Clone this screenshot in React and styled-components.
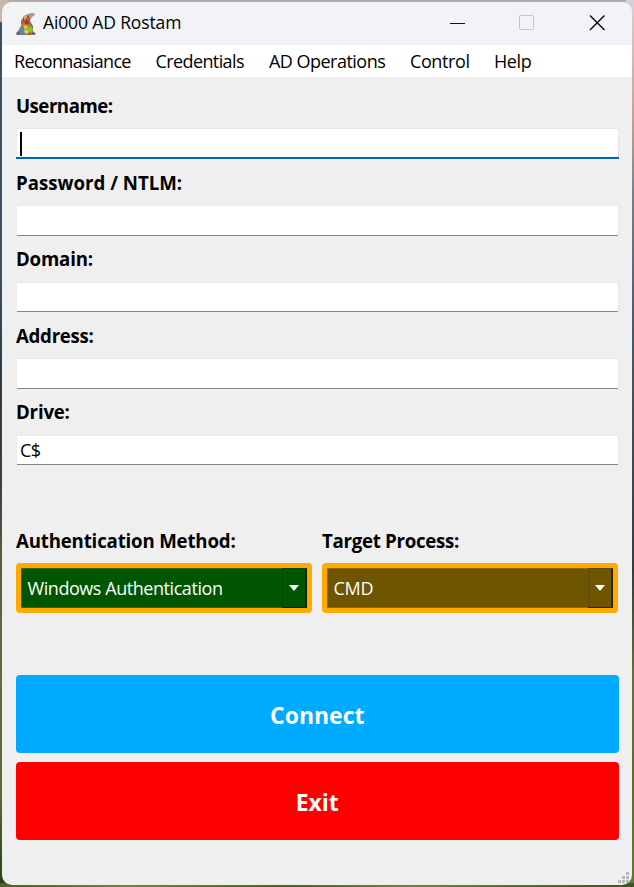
import React from "react";
import styled, { createGlobalStyle } from "styled-components";

const Global = createGlobalStyle`
  * { box-sizing: border-box; }
  html, body { margin: 0; padding: 0; overflow: hidden; }
  body { font-family: "Open Sans", "Noto Sans", sans-serif; font-size: 18px; color: #000; }
`;

const Desktop = styled.div`
  width: 634px;
  height: 887px;
  padding: 2px;
  background:
    linear-gradient(#b5aba9, #b5aba9) 8px 0 / 618px 4px no-repeat,
    linear-gradient(90deg, #4f5e25, #78803f 20%, #50621f 45%, #747f42 65%, #3f5423) 0 883px / 634px 4px no-repeat,
    linear-gradient(#cbb5a9 0 21px, #3d4d5c 23px, #43515f 260px, #303c45 370px, #38413d 480px, #565e42 560px, #636b40 680px, #5e6b36 790px, #254018 887px) 0 0 / 317px 887px no-repeat,
    linear-gradient(#d7d1d8, #c0a391 120px, #78828c 190px, #4b5965 330px, #343e3f 570px, #66703f 680px, #5e6b32 780px, #65763c 887px) 317px 0 / 317px 887px no-repeat;
`;

const Window = styled.main`
  width: 630px;
  height: 883px;
  display: flex;
  flex-direction: column;
  position: relative;
  overflow: hidden;
  border-radius: 10px;
  background: #efefef;
`;

const Text = styled.span`
  white-space: pre;
  letter-spacing: ${(p) => p.$spacing || 0}px;
`;

const TitleBar = styled.header`
  height: 43px;
  flex: none;
  display: flex;
  align-items: center;
  padding-left: 13px;
  background: #f1f3f6;
`;

const Title = styled.h1`
  flex: 1;
  margin: 0 0 3px 6px;
  font-size: 17.5px;
  line-height: 24px;
  font-weight: 400;
`;

const WindowButton = styled.button`
  width: 70px;
  height: 43px;
  padding: 0 0 2px;
  border: 0;
  background: none;
  display: flex;
  align-items: center;
  justify-content: center;
`;

const MenuBar = styled.nav`
  height: 32px;
  flex: none;
  display: flex;
  align-items: center;
  padding-left: 12px;
  background: #fff;
`;

const MenuItem = styled.div`
  width: ${(p) => p.$width}px;
  line-height: 32px;
`;

const Form = styled.form`
  padding: 15px 14px 0;
`;

const Field = styled.div`
  height: ${(p) => p.$height}px;
`;

const Label = styled.label`
  display: block;
  height: 28px;
  line-height: ${(p) => (p.$raised ? 26 : 28)}px;
  margin-bottom: 8px;
  font-weight: 700;
  font-size: 18.67px;
`;

const Input = styled.div`
  height: ${(p) => (p.$tall ? 31 : 30)}px;
  margin-left: ${(p) => (p.$focused ? 0 : 1)}px;
  width: ${(p) => (p.$focused ? 603 : 601)}px;
  display: flex;
  align-items: center;
  padding: ${(p) => (p.$focused ? "1px 4px 0" : "0 3px 1px")};
  background: #fff;
  border-top: 1px solid #e7e9eb;
  border-bottom: ${(p) => (p.$focused ? "2px solid #0067c0" : "1px solid #868686")};
  box-shadow: ${(p) =>
    p.$focused ? "inset 1px 0 #e9ebed, inset -1px 0 #dfe5ea" : "1px 0 #e4e7e9, -1px 0 #ebeced"};
`;

const Caret = styled.span`
  width: 2px;
  height: 24px;
  background: #000;
`;

const Options = styled.div`
  display: grid;
  grid-template-columns: 296px 296px;
  gap: 10px;
  margin-top: 62px;
`;

const Combo = styled.div`
  height: 50px;
  display: flex;
  border: 5px solid #ffaa00;
  border-radius: 4px;
  background: ${(p) => p.$color};
  box-shadow: inset 0 0 0 1px ${(p) => p.$edge};
  color: #fff;
  padding-left: 6.5px;
`;

const ComboValue = styled.div`
  flex: 1;
  line-height: 40px;
`;

const Arrow = styled.div`
  width: 25px;
  height: 40px;
  padding-right: 1px;
  display: flex;
  align-items: center;
  justify-content: center;
  border-style: solid;
  border-width: 1px 2px 1px 1px;
  border-color: ${(p) => p.$edge} ${(p) => p.$dark} ${(p) => p.$dark} ${(p) => p.$edge};
`;

const Actions = styled.div`
  display: grid;
  grid-template-rows: 78px 78px;
  gap: 9px;
  margin-top: 62px;
`;

const ActionButton = styled.button`
  width: 602.5px;
  padding: 1px 0 0;
  border: 0;
  border-radius: 4px;
  background: ${(p) => p.$color};
  color: #fff;
  font: 700 23px/30px "Open Sans", sans-serif;
`;

const Grip = styled.svg`
  position: absolute;
  right: 3px;
  bottom: 2px;
`;

function AppIcon() {
  return (
    <svg width="22" height="24" viewBox="0 0 22 24">
      <path d="M1 21L4 18L6 14L6 9L9 4L13 2L16 5L15 9L18 14L18 19L21 22L17 23L2 23Z" fill="#8f6b5c" />
      <path d="M12 3L15 1L19 1L20 3L17 5L15 8Z" fill="#b89682" />
      <path d="M8 6L11 3L14 4L15 9L11 11L8 11Z" fill="#b05330" />
      <path d="M9 4L12 3L12 6L9 8Z" fill="#dda57b" />
      <path d="M6 12L10 11L15 12L14 15L7 16Z" fill="#c97b3a" />
      <path d="M9 14L12 13L13 17L9 18Z" fill="#eac32e" />
      <path d="M11 9L14 10L13 13L10 12Z" fill="#9a3528" />
      <path d="M4 17L9 16L10 18L9 22H5Z" fill="#229be0" />
      <path d="M12 15L16 14L18 18L17 21L12 19Z" fill="#7cc52c" />
      <path d="M9 18L13 18L14 21L10 22Z" fill="#f6c83c" />
      <path d="M1 22L4 20V23ZM17 20L21 22L18 23Z" fill="#75545a" />
    </svg>
  );
}

const menus = [
  ["Reconnasiance", 141.5, -0.68],
  ["Credentials", 113.5, -0.6],
  ["AD Operations", 141, -0.52],
  ["Control", 84, -0.4],
  ["Help", 60, -0.4],
];

const fields = [
  { label: "Username:", height: 77, spacing: -0.5, focused: true, tall: true },
  { label: "Password / NTLM:", height: 77, spacing: 0, tall: true },
  { label: "Domain:", height: 76, spacing: -0.2, raised: true },
  { label: "Address:", height: 77, spacing: -0.28, tall: true },
  { label: "Drive:", height: 66, spacing: -0.2, raised: true, value: "C$" },
];

const combos = [
  { label: "Authentication Method:", spacing: -0.18, value: "Windows Authentication", valueSpacing: -0.44, color: "#005500", edge: "#416500", dark: "#002500", bevel: "#004800" },
  { label: "Target Process:", spacing: -0.28, value: "CMD", valueSpacing: -0.3, color: "#6e5500", edge: "#936b00", dark: "#2c2200", bevel: "#5d4800" },
];

export default function App() {
  return (
    <Desktop>
      <Global />
      <Window>
        <TitleBar>
          <AppIcon />
          <Title><Text $spacing={-0.13}>Ai000 AD Rostam</Text></Title>
          <WindowButton aria-label="Minimize">
            <svg width="16" height="16"><path d="M1 8.5H16" stroke="#111" /></svg>
          </WindowButton>
          <WindowButton aria-label="Maximize">
            <svg width="16" height="16"><rect x="0.5" y="0.5" width="14" height="14" rx="1" fill="none" stroke="#c4c5c8" /></svg>
          </WindowButton>
          <WindowButton aria-label="Close">
            <svg width="16" height="16"><path d="M1 0.5L15.5 15M15.5 0.5L1 15" stroke="#111" strokeWidth="1.5" /></svg>
          </WindowButton>
        </TitleBar>
        <MenuBar>
          {menus.map(([name, width, spacing]) => (
            <MenuItem key={name} $width={width}><Text $spacing={spacing}>{name}</Text></MenuItem>
          ))}
        </MenuBar>
        <Form>
          {fields.map((f) => (
            <Field key={f.label} $height={f.height}>
              <Label $raised={f.raised}><Text $spacing={f.spacing}>{f.label}</Text></Label>
              <Input $focused={f.focused} $tall={f.tall}>
                {f.focused && <Caret />}
                {f.value && <Text $spacing={-0.6}>{f.value}</Text>}
              </Input>
            </Field>
          ))}
          <Options>
            {combos.map((c) => (
              <div key={c.label}>
                <Label><Text $spacing={c.spacing}>{c.label}</Text></Label>
                <Combo $color={c.color} $edge={c.edge}>
                  <ComboValue><Text $spacing={c.valueSpacing}>{c.value}</Text></ComboValue>
                  <Arrow $edge={c.bevel} $dark={c.dark}>
                    <svg width="10" height="6"><path d="M0 0H10L5 6Z" fill="#fff" /></svg>
                  </Arrow>
                </Combo>
              </div>
            ))}
          </Options>
          <Actions>
            <ActionButton type="button" $color="#00aaff"><Text>Connect</Text></ActionButton>
            <ActionButton type="button" $color="#ff0000"><Text>Exit</Text></ActionButton>
          </Actions>
        </Form>
        <Grip width="11" height="11">
          <path d="M8 0h3v3h-3zM4 4h3v3h-3zM8 4h3v3h-3zM0 8h3v3h-3zM4 8h3v3h-3zM8 8h3v3h-3z" fill="#b8b8b8" />
        </Grip>
      </Window>
    </Desktop>
  );
}
